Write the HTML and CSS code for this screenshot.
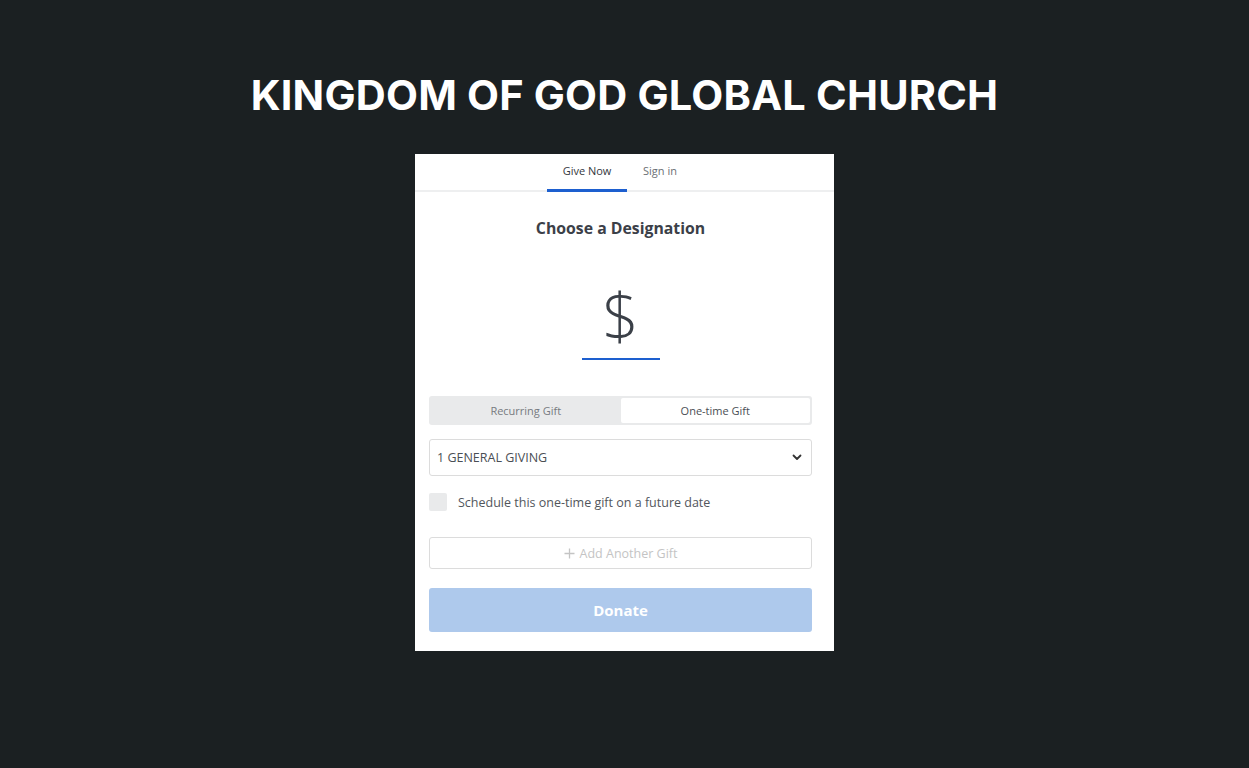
FILE: index.html
```html
<!DOCTYPE html>
<html>
<head>
<meta charset="utf-8">
<link rel="stylesheet" href="styles.css">
</head>
<body>
<main class="page">
  <h1 class="title">KINGDOM OF GOD GLOBAL CHURCH</h1>
  <section class="card">
    <nav class="tabs">
      <span class="tab active">Give Now</span>
      <span class="tab">Sign in</span>
    </nav>
    <div class="body">
      <h2 class="heading">Choose a Designation</h2>
      <div class="amount">
        <span class="dollar">$</span>
        <span class="amount-line"></span>
      </div>
      <div class="toggle">
        <span class="opt">Recurring Gift</span>
        <span class="opt selected">One-time Gift</span>
      </div>
      <div class="select">
        <span>1 GENERAL GIVING</span>
        <svg class="chev" width="10" height="7" viewBox="0 0 10 7"><path d="M1.5 1.5 L5 5 L8.5 1.5" fill="none" stroke="#333" stroke-width="1.8" stroke-linecap="round" stroke-linejoin="round"/></svg>
      </div>
      <label class="check">
        <span class="box"></span>
        <span class="check-text">Schedule this one-time gift on a future date</span>
      </label>
      <div class="add">
        <svg width="11" height="11" viewBox="0 0 11 11"><path d="M5.5 0.5 V10.5 M0.5 5.5 H10.5" stroke="#c4c4c4" stroke-width="1.3"/></svg>
        <span>Add Another Gift</span>
      </div>
      <div class="donate">Donate</div>
    </div>
  </section>
</main>
</body>
</html>
```
FILE: styles.css
```css
html, body {
  margin: 0;
  padding: 0;
  background: #1b2022;
}
.page {
  display: flex;
  flex-direction: column;
  align-items: center;
  padding-top: 68px;
}
.title {
  margin: 0;
  font-family: Inter, "Liberation Sans", sans-serif;
  font-weight: 700;
  font-size: 41.5px;
  line-height: 54px;
  color: #ffffff;
  letter-spacing: 0.2px;
}
.card {
  margin-top: 32px;
  width: 419px;
  height: 497px;
  background: #ffffff;
  font-family: "Open Sans", sans-serif;
  box-sizing: border-box;
}
.tabs {
  display: flex;
  justify-content: center;
  height: 38px;
  border-bottom: 2px solid #eeeff0;
  box-sizing: border-box;
  padding-right: 9px;
}
.tab {
  font-size: 11px;
  color: #6b6f74;
  padding: 9px 16px 0;
  height: 38px;
  box-sizing: border-box;
}
.tab.active {
  color: #33373d;
  border-bottom: 3px solid #1d5fcf;
  margin-bottom: -2px;
  width: 80px;
  text-align: center;
  padding-left: 0;
  padding-right: 0;
}
.body {
  padding: 0 22px 0 14px;
  display: flex;
  flex-direction: column;
}
.heading {
  margin: 26px 0 0;
  text-align: center;
  font-size: 15.8px;
  font-weight: 700;
  color: #3b4048;
  line-height: 20px;
}
.amount {
  display: flex;
  flex-direction: column;
  align-items: center;
  margin-top: 42px;
}
.dollar {
  font-size: 64px;
  font-weight: 300;
  color: #3b4048;
  line-height: 72px;
}
.amount-line {
  width: 78px;
  height: 2px;
  background: #1d5fcf;
  margin-top: 6px;
}
.toggle {
  margin-top: 36px;
  height: 29px;
  background: #e9eaeb;
  border-radius: 3px;
  display: flex;
  padding: 2px;
  box-sizing: border-box;
}
.opt {
  flex: 1;
  display: flex;
  align-items: center;
  justify-content: center;
  font-size: 11px;
  color: #777b80;
  border-radius: 2px;
}
.opt.selected {
  background: #ffffff;
  color: #4a4e54;
}
.select {
  margin-top: 14px;
  height: 37px;
  border: 1px solid #dcdcdc;
  border-radius: 3px;
  display: flex;
  align-items: center;
  justify-content: space-between;
  padding: 0 9px 0 7px;
  box-sizing: border-box;
  font-size: 12.5px;
  color: #4a4e54;
}
.chev {
  display: block;
}
.check {
  margin-top: 17px;
  display: flex;
  align-items: center;
  gap: 11px;
}
.box {
  width: 18px;
  height: 18px;
  background: #e9eaeb;
  border-radius: 2px;
}
.check-text {
  font-size: 12.5px;
  color: #52565c;
}
.add {
  margin-top: 26px;
  height: 32px;
  border: 1px solid #dcdcdc;
  border-radius: 3px;
  box-sizing: border-box;
  display: flex;
  align-items: center;
  justify-content: center;
  gap: 5px;
  font-size: 12.5px;
  color: #c4c4c4;
}
.donate {
  margin-top: 19px;
  height: 44px;
  background: #aec9ec;
  border-radius: 3px;
  display: flex;
  align-items: center;
  justify-content: center;
  color: #ffffff;
  font-weight: 700;
  font-size: 15px;
}
```
